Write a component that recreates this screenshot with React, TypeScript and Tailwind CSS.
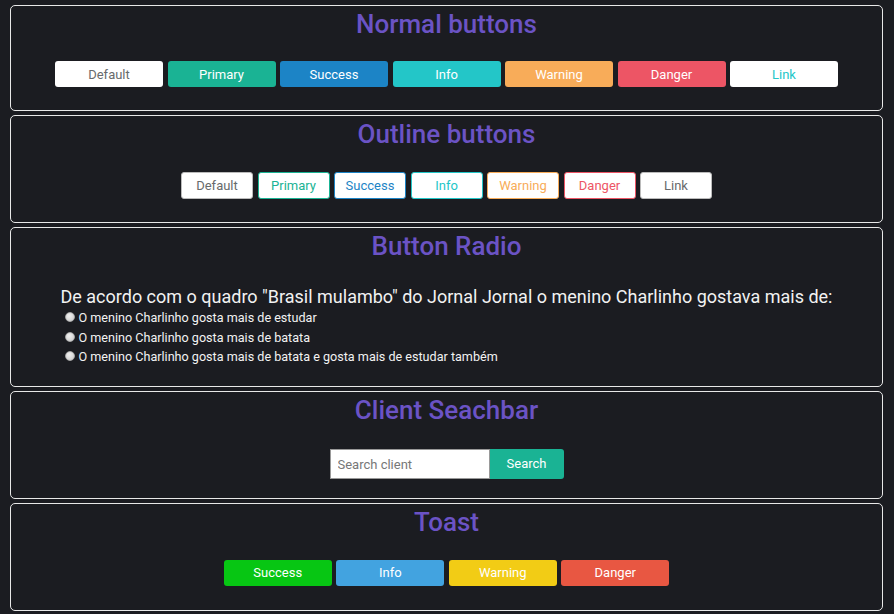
import React from "react";

const normalButtons = [
  { label: "Default", cls: "bg-white text-[#676a6c]" },
  { label: "Primary", cls: "bg-[#1ab394] text-white" },
  { label: "Success", cls: "bg-[#1c84c6] text-white" },
  { label: "Info", cls: "bg-[#23c6c8] text-white" },
  { label: "Warning", cls: "bg-[#f8ac59] text-white" },
  { label: "Danger", cls: "bg-[#ed5565] text-white" },
  { label: "Link", cls: "bg-white text-[#23c6c8]" },
];

const outlineButtons = [
  { label: "Default", cls: "border-[#bbb] text-[#676a6c]" },
  { label: "Primary", cls: "border-[#1ab394] text-[#1ab394]" },
  { label: "Success", cls: "border-[#1c84c6] text-[#1c84c6]" },
  { label: "Info", cls: "border-[#23c6c8] text-[#23c6c8]" },
  { label: "Warning", cls: "border-[#f8ac59] text-[#f8ac59]" },
  { label: "Danger", cls: "border-[#ed5565] text-[#ed5565]" },
  { label: "Link", cls: "border-[#bbb] text-[#676a6c]" },
];

const toastButtons = [
  { label: "Success", cls: "bg-[#07c613]" },
  { label: "Info", cls: "bg-[#42a3e0]" },
  { label: "Warning", cls: "bg-[#f2cc15]" },
  { label: "Danger", cls: "bg-[#e85742]" },
];

const options = [
  "O menino Charlinho gosta mais de estudar",
  "O menino Charlinho gosta mais de batata",
  "O menino Charlinho gosta mais de batata e gosta mais de estudar também",
];

const Section = ({ title, children, className = "" }: { title: string; children: React.ReactNode; className?: string }) => (
  <section className={`border border-[#e8e8e8] rounded-[5px] pt-[3px] ${className}`}>
    <h2 className="text-center text-[26px] leading-[31px] font-medium text-[#6b53c5]">{title}</h2>
    {children}
  </section>
);

export default function App() {
  return (
    <div
      className="min-h-screen bg-[#1b1c21] pr-[11px] pl-[10px] pt-[5px] pb-[4px] flex flex-col gap-[4px]"
      style={{ fontFamily: "Roboto, 'Liberation Sans', sans-serif" }}
    >
      <Section title="Normal buttons" className="pb-[23px]">
        <div className="mt-[21px] flex justify-center gap-[4.5px]">
          {normalButtons.map((b) => (
            <button key={b.label} className={`w-[108px] h-[26px] pt-[1px] rounded-[3px] text-[13px] ${b.cls}`}>
              {b.label}
            </button>
          ))}
        </div>
      </Section>

      <Section title="Outline buttons" className="pb-[23px]">
        <div className="mt-[22px] flex justify-center gap-[4.5px]">
          {outlineButtons.map((b) => (
            <button key={b.label} className={`w-[72px] h-[27px] rounded-[3px] border bg-white text-[13px] ${b.cls}`}>
              {b.label}
            </button>
          ))}
        </div>
      </Section>

      <Section title="Button Radio" className="pb-[19px]">
        <div className="mt-[23px] flex justify-center">
          <div className="w-fit">
            <p className="text-[18px] leading-[23px] text-[#f2f2f2]">
              De acordo com o quadro "Brasil mulambo" do Jornal Jornal o menino Charlinho gostava mais de:
            </p>
            {options.map((o) => (
              <label key={o} className="flex items-start text-[12.6px] leading-[19.5px] text-[#f2f2f2]">
                <span className="mt-[4px] ml-[4px] w-[10px] h-[10px] shrink-0 rounded-full border border-[#a8a8a8] bg-[radial-gradient(circle_at_40%_35%,#f0f0f0,#c8c8c8)]" />
                <span className="ml-[4px]">{o}</span>
              </label>
            ))}
          </div>
        </div>
      </Section>

      <Section title="Client Seachbar" className="pb-[19px]">
        <div className="mt-[23px] flex justify-center">
          <input
            placeholder="Search client"
            className="w-[160px] h-[30px] border border-[#999] bg-white pl-[7px] pt-[1px] text-[13px] text-[#333] placeholder:text-[#777] outline-none"
          />
          <button className="w-[74px] h-[30px] pt-[1px] rounded-r-[3px] bg-[#1ab394] text-white text-[13px]">Search</button>
        </div>
      </Section>

      <Section title="Toast" className="pb-[24px]">
        <div className="mt-[22px] flex justify-center gap-[4.5px]">
          {toastButtons.map((b) => (
            <button key={b.label} className={`w-[108px] h-[26px] pt-[1px] rounded-[3px] text-white text-[13px] ${b.cls}`}>
              {b.label}
            </button>
          ))}
        </div>
      </Section>
    </div>
  );
}
